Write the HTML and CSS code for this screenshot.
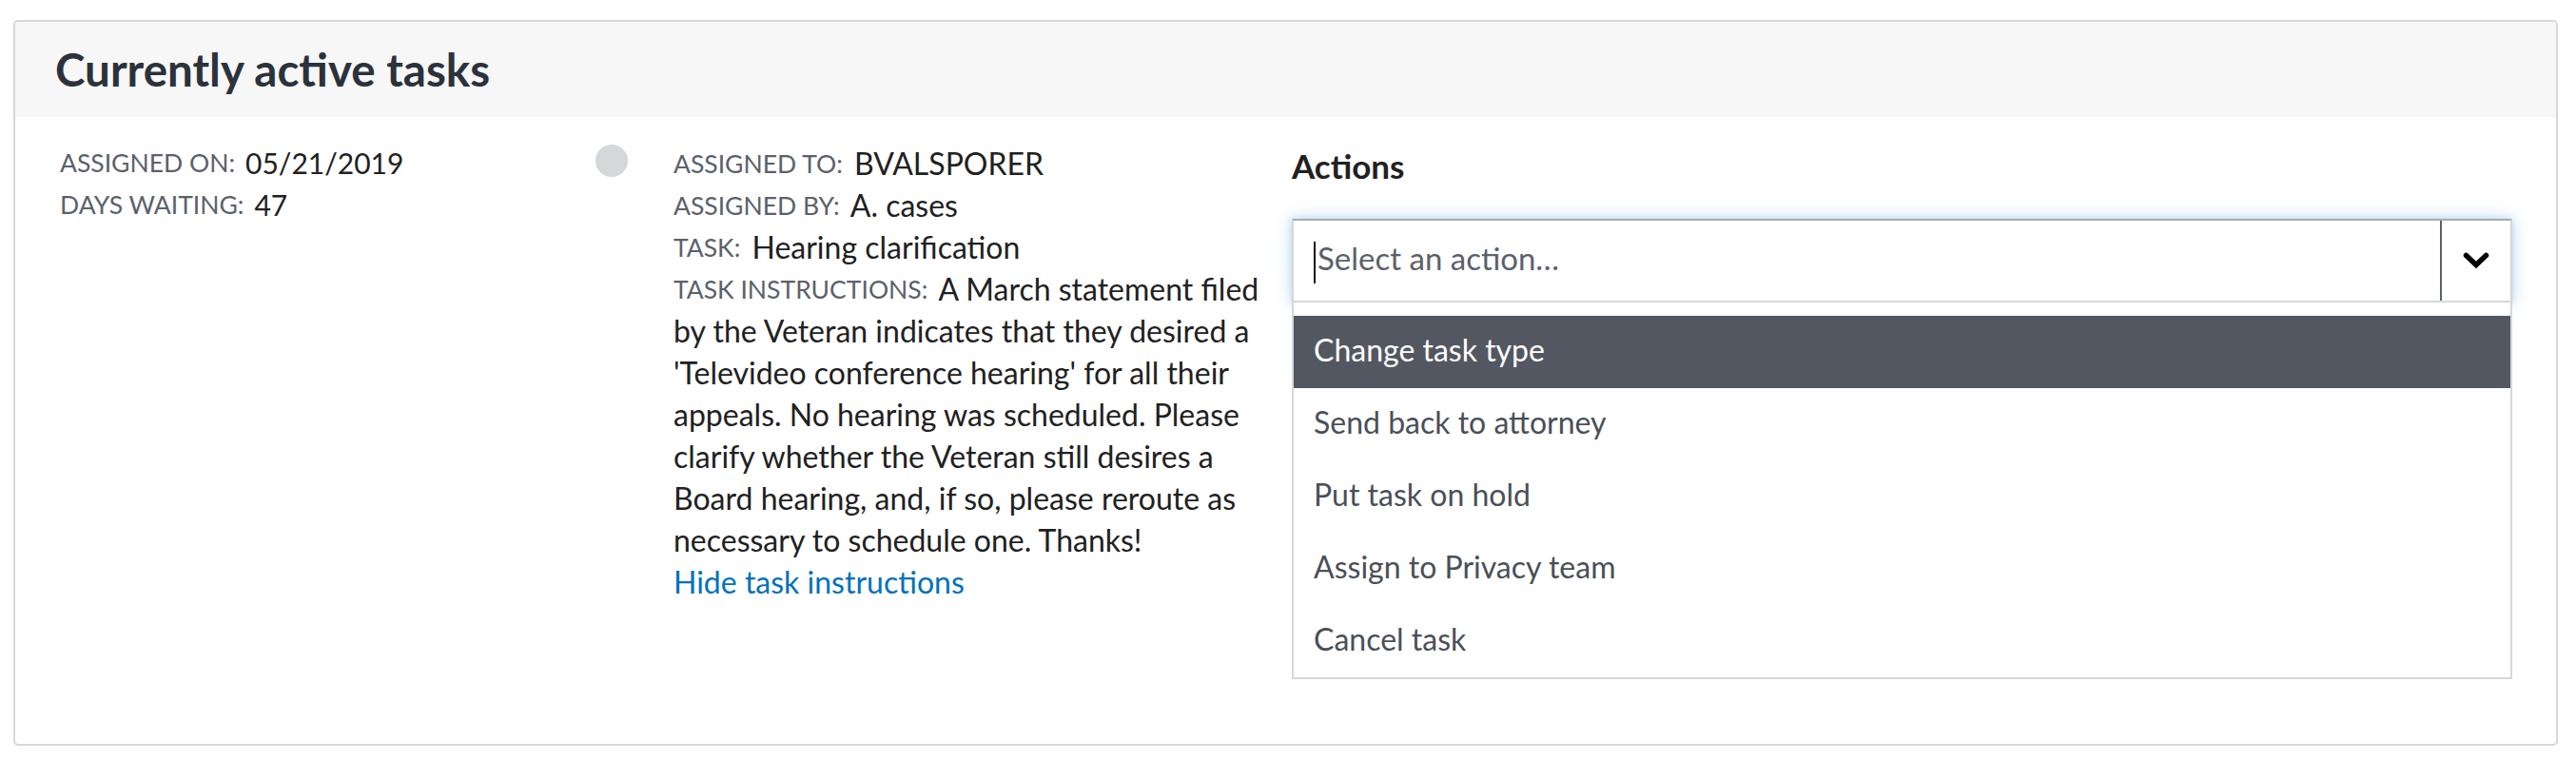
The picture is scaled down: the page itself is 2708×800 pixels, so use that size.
FILE: index.html
```html
<!DOCTYPE html>
<html lang="en">
<head>
<meta charset="utf-8">
<title>Currently active tasks</title>
<link rel="stylesheet" href="styles.css">
</head>
<body>
<section class="card">
  <header class="card-header">
    <h2 class="card-title">Currently active tasks</h2>
  </header>
  <div class="task-row">
    <dl class="task-dates">
      <div class="field"><dt class="label">Assigned on:</dt><dd class="date-value">05/21/2019</dd></div>
      <div class="field"><dt class="label">Days waiting:</dt><dd class="date-value">47</dd></div>
    </dl>
    <div class="status-dot"></div>
    <div class="task-details">
      <p class="line"><span class="label inline">Assigned to:</span> BVALSPORER</p>
      <p class="line"><span class="label inline">Assigned by:</span> A. cases</p>
      <p class="line"><span class="label inline">Task:</span> Hearing clarification</p>
      <p class="line"><span class="label inline">Task instructions:</span> A March statement filed by the Veteran indicates that they desired a 'Televideo conference hearing' for all their appeals. No hearing was scheduled. Please clarify whether the Veteran still desires a Board hearing, and, if so, please reroute as necessary to schedule one. Thanks!</p>
      <a class="link" href="#">Hide task instructions</a>
    </div>
    <div class="actions">
      <h3 class="actions-title">Actions</h3>
      <div class="select">
        <div class="select-control">
          <div class="select-value"><span class="caret"></span><span class="placeholder">Select an action…</span></div>
          <div class="select-indicator">
            <svg width="28" height="18" viewBox="0 0 28 18" aria-hidden="true"><polyline points="3.5,3.5 14,13.5 24.5,3.5" fill="none" stroke="#000" stroke-width="5.5" stroke-linecap="round" stroke-linejoin="miter"/></svg>
          </div>
        </div>
        <ul class="select-menu">
          <li class="option is-focused">Change task type</li>
          <li class="option">Send back to attorney</li>
          <li class="option">Put task on hold</li>
          <li class="option">Assign to Privacy team</li>
          <li class="option">Cancel task</li>
        </ul>
      </div>
    </div>
  </div>
</section>
</body>
</html>
```
FILE: styles.css
```css
* { box-sizing: border-box; }

body {
  margin: 0;
  background: #ffffff;
  font-family: Lato, "Liberation Sans", sans-serif;
  color: #212121;
}

.card {
  margin: 21px 19px 16px 14px;
  height: 763px;
  border: 2px solid #d6d7d9;
  border-radius: 5px;
  overflow: hidden;
  background: #ffffff;
}

.card-header {
  height: 100px;
  padding: 26px 42px 0;
  background: #f7f7f7;
}

.card-title {
  margin: 0;
  font-size: 47.5px;
  line-height: 1;
  font-weight: 700;
  color: #2c323c;
}

.task-row {
  display: flex;
  align-items: flex-start;
  padding: 26px 46px 0 47px;
}

.task-dates {
  width: 563px;
  flex: none;
  margin: 0;
}

.field {
  display: flex;
  align-items: flex-start;
  height: 44px;
}

.label {
  font-size: 26.5px;
  line-height: 44px;
  color: #5b616b;
  text-transform: uppercase;
}

.field .label { margin-right: 11px; }

.date-value {
  margin: 0;
  font-size: 30px;
  line-height: 44px;
  color: #212121;
}

.status-dot {
  flex: none;
  width: 34px;
  height: 34px;
  margin-top: 3px;
  border-radius: 50%;
  background: #d6d7d9;
}

.task-details {
  flex: none;
  width: 622px;
  margin: 1px 0 0 48px;
  font-size: 32px;
  line-height: 44px;
  color: #212121;
}

.line { margin: 0; }

.label.inline {
  display: inline-block;
  vertical-align: top;
  margin-right: 4px;
}

.link {
  display: block;
  color: #0071bc;
  text-decoration: none;
}

.actions {
  flex: 1;
  margin-left: 28px;
}

.actions-title {
  margin: 8px 0 38px;
  font-size: 35px;
  line-height: 35px;
  font-weight: 700;
  color: #212121;
}

.select-control {
  display: flex;
  height: 88px;
  border: 2px solid #d6d7d9;
  border-top-color: #a9acb1;
  background: #ffffff;
  box-shadow: 0 0 6px rgba(110, 170, 225, 0.35), 0 0 18px rgba(130, 185, 235, 0.45);
}

.select-value {
  flex: 1;
  display: flex;
  align-items: center;
  padding-left: 21px;
}

.caret {
  width: 2px;
  height: 44px;
  margin: 4px 2px 0 0;
  background: #111111;
}

.placeholder {
  margin-bottom: 6px;
  font-size: 33px;
  color: #5b616b;
}

.select-indicator {
  flex: none;
  width: 74px;
  display: flex;
  align-items: center;
  justify-content: center;
  border-left: 2px solid #5b616b;
}

.select-menu {
  list-style: none;
  margin: 0;
  padding: 14px 0 0;
  border: 2px solid #d6d7d9;
  border-top: none;
  background: #ffffff;
}

.option {
  height: 76px;
  padding: 0 0 4px 21px;
  font-size: 32px;
  line-height: 72px;
  color: #4a4f58;
}

.option.is-focused {
  background: #535761;
  color: #ffffff;
}
```
